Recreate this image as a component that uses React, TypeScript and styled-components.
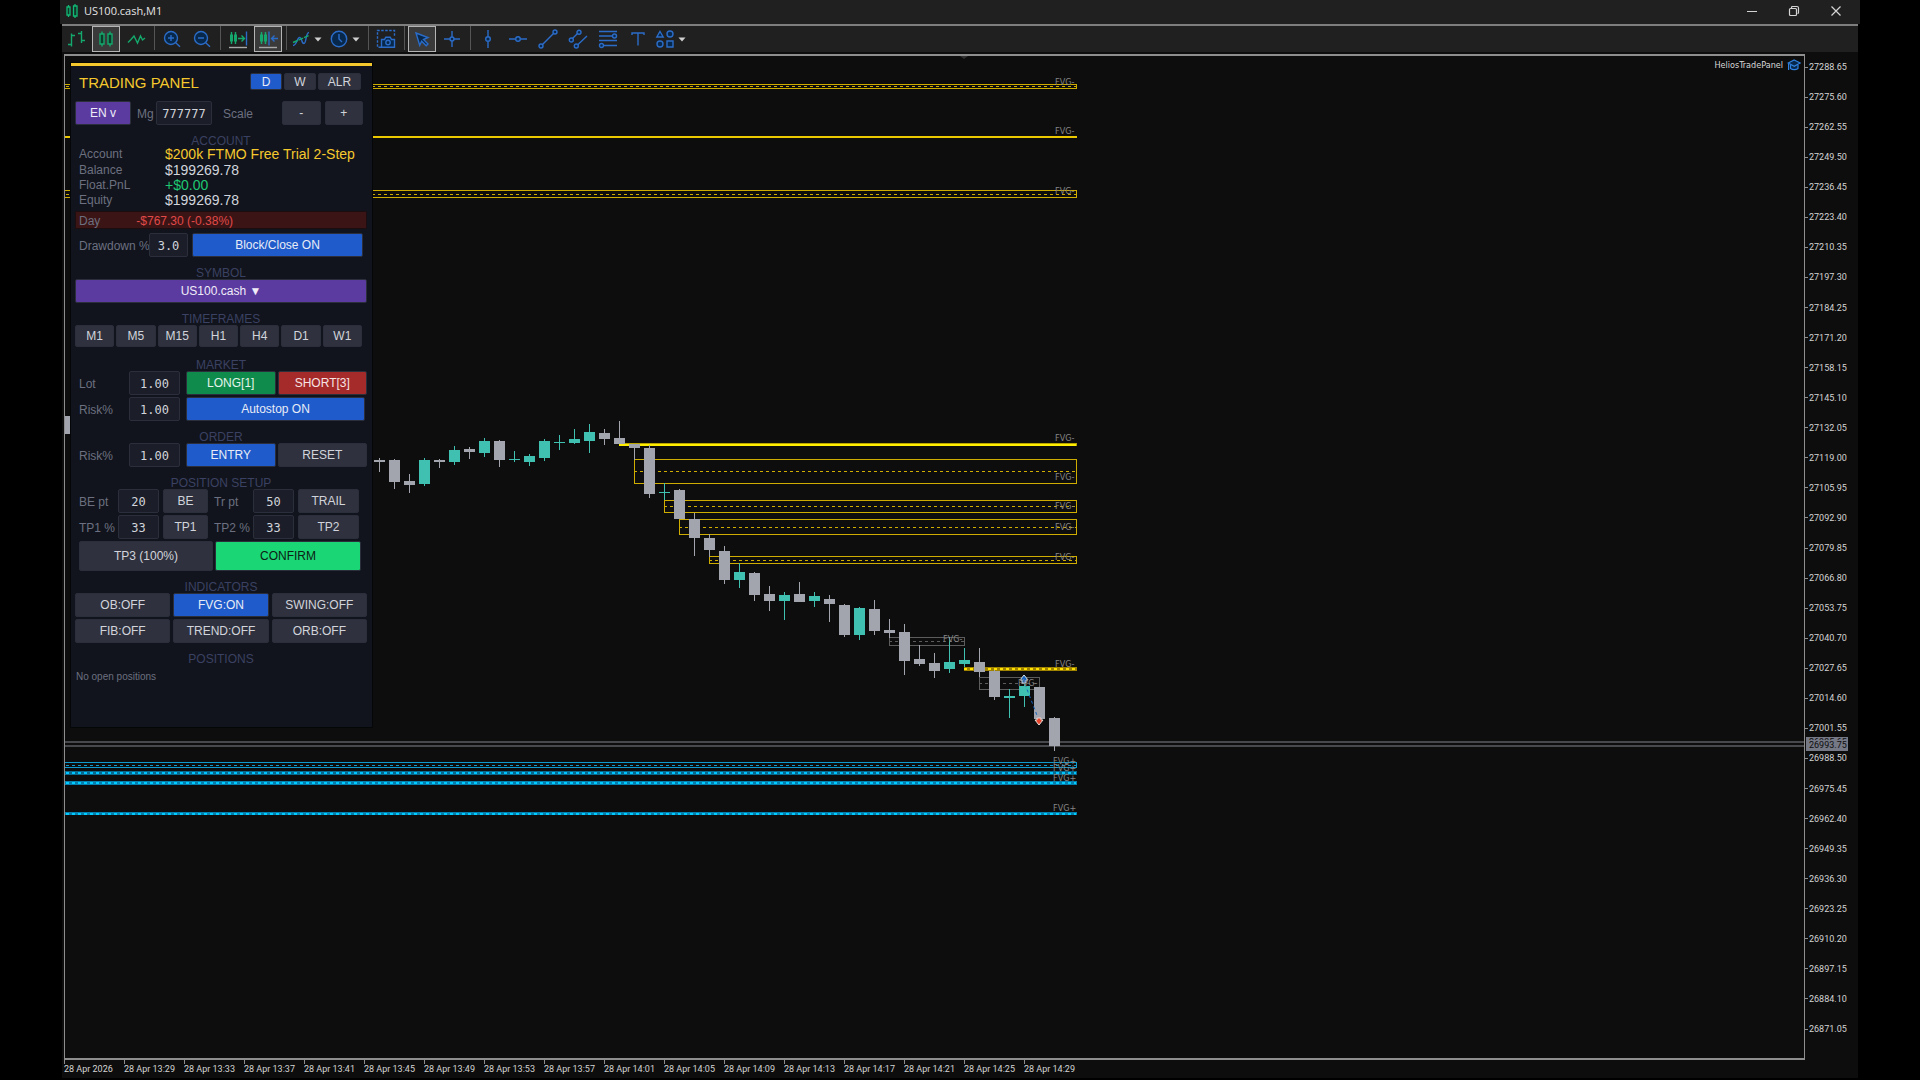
import React from 'react';
import styled, { createGlobalStyle, css } from 'styled-components';

const sans = '"Liberation Sans", Arial, sans-serif';
const tiny = '"DejaVu Sans Condensed", "Open Sans", sans-serif';
const scale = 'Roboto, "Open Sans", sans-serif';
const mono = '"DejaVu Sans Mono", "Liberation Mono", monospace';

const color = {
  desk: '#000000',
  bar: '#202020',
  chart: '#0d0d0d',
  frame: '#8e8e8e',
  panel: '#11141c',
  gold: '#f5c82e',
  blue: '#1f5bca',
  purple: '#5b3ba0',
  green: '#0f8b4c',
  red: '#a52a2a',
  mint: '#1bd675',
  grey: '#2f323e',
  field: '#1b1e28',
  label: '#6c7080',
  heading: '#3b4162',
  text: '#d2d4dc',
  zone: '#cfac00',
  up: '#40c0b0',
  down: '#a2a4ae',
  iconBlue: '#2b6cc8',
  iconGreen: '#14a86c',
  iconFill: '#07284a',
};

const GlobalStyle = createGlobalStyle`
  * { box-sizing: border-box; }
  body { margin: 0; background: ${color.desk}; }
  button, input { font: inherit; margin: 0; padding: 0; }
`;

/* ---------- window frame ---------- */

const Desktop = styled.div`
  min-height: 100vh;
  display: flex;
  flex-direction: column;
  padding: 0 60px 2px;
  font-family: ${sans};
  font-size: 12px;
`;

const TitleBar = styled.header`
  display: flex;
  align-items: center;
  height: 24px;
  padding: 0 3px 2px 4px;
  background: ${color.bar};
`;

const Title = styled.h1`
  flex: 1;
  margin: 0 0 0 5px;
  font: 500 11px/16px "Open Sans", sans-serif;
  color: #e4e4e4;
`;

const WindowButton = styled.button`
  display: grid;
  place-items: center;
  width: 42px;
  height: 20px;
  border: 0;
  background: transparent;
`;

const Body = styled.main`
  flex: 1;
  display: flex;
  flex-direction: column;
  margin: 0 2px;
  background: ${color.chart};
`;

const Toolbar = styled.nav`
  display: flex;
  gap: 2px;
  height: 28px;
  margin-bottom: 2px;
  border-top: 2px solid #7e7e7e;
  background: ${color.bar};
`;

const ToolButton = styled.button<{ $active?: boolean; $menu?: boolean }>`
  display: flex;
  align-items: center;
  justify-content: ${p => (p.$menu ? 'flex-start' : 'center')};
  gap: 3px;
  width: ${p => (p.$menu ? 36 : 28)}px;
  height: 26px;
  border: 1px solid ${p => (p.$active ? '#b4b4b4' : 'transparent')};
  background: ${p => (p.$active ? '#3a3a3a' : 'transparent')};
  svg { flex: none; }
`;

const Divider = styled.span`
  width: 1px;
  height: 24px;
  margin: 0 1px 0 2px;
  background: #555;
`;

/* ---------- chart frame ---------- */

const ChartGrid = styled.section`
  flex: 1;
  display: grid;
  grid-template-columns: 1fr 53px;
  grid-template-rows: minmax(760px, 1fr) 18px;
  padding-left: 2px;
`;

const Plot = styled.div`
  position: relative;
  overflow: hidden;
  border: 1px solid ${color.frame};
  border-width: 2px 1px;
`;

const Canvas = styled.svg`
  position: absolute;
  inset: 0;
  width: 100%;
  height: 100%;
`;

const ExpertTag = styled.div`
  position: absolute;
  top: 3px;
  right: 3px;
  display: flex;
  align-items: center;
  gap: 4px;
  font: 9px/12px ${tiny};
  color: #d8d8d8;
`;

const PriceAxis = styled.ol`
  position: relative;
  display: flex;
  flex-direction: column;
  justify-content: space-between;
  margin: 0;
  padding: 7px 0 25px;
  list-style: none;
  font: 9px/12px ${scale};
  color: #d4d4d4;
`;

const Price = styled.li`
  display: flex;
  align-items: center;
  gap: 1px;
  height: 12px;
  &::before {
    content: '';
    width: 3px;
    height: 1px;
    background: ${color.frame};
  }
`;

const PriceTag = styled.li<{ $top: number }>`
  position: absolute;
  top: ${p => p.$top}px;
  left: 1px;
  width: 42px;
  height: 11px;
  padding-left: 3px;
  line-height: 11px;
  background: #757885;
  color: #0d0d0d;
`;

const TimeAxis = styled.ol`
  grid-column: 1 / -1;
  display: flex;
  margin: 0;
  padding: 0;
  list-style: none;
  overflow: hidden;
  font: 9px/10px ${scale};
  color: #d4d4d4;
`;

const Time = styled.li`
  flex: none;
  width: 60px;
  white-space: nowrap;
  &::before {
    content: '';
    display: block;
    width: 1px;
    height: 4px;
    background: ${color.frame};
  }
`;

/* ---------- trading panel ---------- */

const Panel = styled.form`
  position: absolute;
  top: 7px;
  left: 6px;
  width: 301px;
  padding: 7px 5px 44px 4px;
  border-top: 3px solid ${color.gold};
  background: ${color.panel};
  box-shadow: 0 0 0 1px #050608;
  color: ${color.label};
`;

const PanelHeader = styled.div`
  display: flex;
  align-items: center;
  gap: 2px;
  height: 17px;
  margin-bottom: 11px;
  padding: 0 6px 0 4px;
`;

const PanelTitle = styled.h2`
  flex: 1;
  margin: 0;
  padding-top: 2px;
  font-size: 15px;
  line-height: 17px;
  font-weight: 400;
  color: ${color.gold};
`;

const SectionTitle = styled.h3`
  margin: 10px 0 0;
  font-size: 12px;
  line-height: 12px;
  font-weight: 400;
  text-align: center;
  color: ${color.heading};
`;

const tones = {
  grey: css`background: ${color.grey}; color: ${color.text};`,
  blue: css`background: ${color.blue}; color: #e8ecf6;`,
  purple: css`background: ${color.purple}; color: #f0ecf8;`,
  green: css`background: ${color.green}; color: #e4f4ea;`,
  red: css`background: ${color.red}; color: #f6e4e4;`,
  mint: css`background: ${color.mint}; color: #0c2014;`,
};

const PanelButton = styled.button<{ $tone?: keyof typeof tones; $width?: number }>`
  width: ${p => (p.$width ? `${p.$width}px` : '100%')};
  height: 100%;
  border: 1px solid #2b2f3b;
  border-radius: 2px;
  white-space: nowrap;
  ${p => tones[p.$tone ?? 'grey']}
`;

const Field = styled.input`
  width: 100%;
  height: 100%;
  padding-top: 1px;
  border: 1px solid #2b2f3b;
  border-radius: 2px;
  background: ${color.field};
  color: ${color.text};
  font: 12px ${mono};
  text-align: center;
`;

const Row = styled.div<{ $cols: string; $gap?: number; $height?: number; $pad?: string }>`
  display: grid;
  grid-template-columns: ${p => p.$cols};
  align-items: center;
  column-gap: ${p => p.$gap ?? 0}px;
  height: ${p => p.$height ?? 24}px;
  padding: ${p => p.$pad ?? 0};
  & + & { margin-top: 2px; }
`;

const Group = styled.div`
  display: flex;
  gap: 2px;
  height: 100%;
`;

const ScaleGroup = styled(Group)`
  gap: 4px;
`;

const Label = styled.label<{ $inset?: number }>`
  padding: 2px 0 0 ${p => p.$inset ?? 4}px;
  white-space: nowrap;
`;

const Stats = styled.dl`
  display: grid;
  grid-template-columns: 86px 1fr;
  grid-template-rows: 16px repeat(3, 15px);
  margin: 0;
  padding-left: 4px;
  line-height: 14px;
  white-space: nowrap;
  dd { margin: 0; font-size: 14px; }
`;

const Value = styled.dd<{ $color?: string }>`
  color: ${p => p.$color ?? color.text};
`;

const DayResult = styled.div`
  display: flex;
  align-items: center;
  height: 18px;
  margin: 3px 0 4px;
  padding: 2px 0 0 3px;
  border: 1px solid #1c0d10;
  background: #3b1416;
  output { margin-left: 36px; color: #e04a48; }
`;

const Note = styled.p`
  margin: 6px 0 0 1px;
  font-size: 10px;
  line-height: 12px;
`;

/* ---------- toolbar icons ---------- */

const B = color.iconBlue;
const G = color.iconGreen;
const F = color.iconFill;

function Icon({ children, size = 20 }: { children: React.ReactNode; size?: number }) {
  return (
    <svg width={size} height={size} viewBox="0 0 20 20" fill="none" stroke={B} strokeWidth="1.4" aria-hidden="true">
      {children}
    </svg>
  );
}

const Caret = () => (
  <svg width="8" height="5" viewBox="0 0 8 5" aria-hidden="true">
    <path d="M0.5 0.5h7L4 4.5z" fill="#d0d0d0" />
  </svg>
);

const icons = {
  bars: <Icon><path stroke={G} d="M5.5 4.5v13M2 15.5h3.5M5.5 6.5H9M15.5 2v12M12 4.5h3.500M15.5 11.500H19" /></Icon>,
  candles: (
    <Icon>
      <path stroke={G} d="M6 2.500v2.500M6 15v2.500M14 2.500v2.500M14 15v2.500" />
      <path stroke={G} fill="#0d3a2a" d="M4 5h4v10H4zM12 5h4v10h-4z" />
    </Icon>
  ),
  line: <Icon><path stroke={G} d="M2 13.500l3-3 3-3.500 3.500 7 3-7 2 4 2.500-2" /></Icon>,
  zoomIn: <Icon><circle cx="9" cy="9" r="6.500" fill={F} /><path d="M13.700 13.700l4.300 4M6 9h6M9 6v6" /></Icon>,
  zoomOut: <Icon><circle cx="9" cy="9" r="6.500" fill={F} /><path d="M13.700 13.700l4.300 4M6 9h6" /></Icon>,
  scroll: (
    <Icon>
      <path stroke={G} d="M3.500 3v12M7.500 3v12M10 9.500h6M13.500 6.500l3 3-3 3" />
      <path fill={G} stroke="none" d="M2 5.500h3v7H2zM6 5.500h3v7H6z" />
      <path d="M18.500 2.500v14" />
      <path stroke="#a8a8a8" d="M1 18.500h18" />
    </Icon>
  ),
  shift: (
    <Icon>
      <path stroke={G} d="M3.500 3v12M7.500 3v12" />
      <path fill={G} stroke="none" d="M2 5.500h3v7H2zM6 5.500h3v7H6z" />
      <path d="M11 2.500v14M13.500 9.500H20M16.500 6.500l-3 3 3 3" />
      <path stroke="#a8a8a8" d="M1 18.500h18" />
    </Icon>
  ),
  indicator: (
    <Icon>
      <path d="M2 16.500c4 0 4-8 6.500-8 3 0 1.500 6 4.500 6 2.500 0 1.500-11 5-11" />
      <path stroke={G} strokeDasharray="5 1" d="M2 13.500L18 6.500" />
    </Icon>
  ),
  clock: <Icon><circle cx="10" cy="10" r="7.700" fill={F} /><path d="M10 5v5l3 3" /></Icon>,
  camera: (
    <Icon>
      <path strokeDasharray="2.500 1.500" d="M5 18.300H1.500V1.500h17V7" />
      <path fill={F} d="M5.500 10.500h3l1.300-2.300h4.400l1.300 2.300h3v7.800h-13z" />
      <circle cx="12" cy="13.500" r="2.200" />
    </Icon>
  ),
  cursor: <Icon><path fill={F} d="M4 4l12 4.500-4.500 2 4.500 4.500-1.800 1.800-4.500-4.500-2 4z" /></Icon>,
  cross: <Icon><path d="M10 2v6M10 12v6M2 10h6M12 10h6" /><circle cx="10" cy="10" r="2" fill={F} /></Icon>,
  vline: <Icon><path d="M10 1v6.500M10 12.500V19" /><circle cx="10" cy="10" r="2.300" fill={F} /></Icon>,
  hline: <Icon><path d="M1 10h6.500M12.500 10H19" /><circle cx="10" cy="10" r="2.300" fill={F} /></Icon>,
  trend: <Icon><path d="M4.500 15.500l11-11" /><circle cx="3" cy="17" r="2" fill={F} /><circle cx="17" cy="3" r="2" fill={F} /></Icon>,
  channel: (
    <Icon>
      <path d="M4.500 9.500l5-5M9.500 16L19 7" />
      <circle cx="3.300" cy="11" r="2" fill={F} /><circle cx="11" cy="3.300" r="2" fill={F} /><circle cx="8.300" cy="17" r="2" fill={F} />
    </Icon>
  ),
  fib: (
    <Icon>
      <path d="M1 2.500h18M1 7h13M1 11.500h18M6 16.500h13" />
      <circle cx="16.500" cy="7" r="2" fill={F} /><circle cx="3.500" cy="16.500" r="2" fill={F} />
    </Icon>
  ),
  text: <Icon><path d="M4 6V4h12v2M10 4v12.500" /></Icon>,
  shapes: (
    <Icon>
      <path fill={F} d="M5 2.500l3.200 5.500H1.800zM12 12h6v6h-6z" />
      <circle cx="15" cy="5" r="3" fill={F} /><circle cx="5" cy="15" r="3" fill={F} />
    </Icon>
  ),
};

type Tool = { id: keyof typeof icons; name: string; active?: boolean; menu?: boolean };

const toolGroups: Tool[][] = [
  [{ id: 'bars', name: 'Bar chart' }, { id: 'candles', name: 'Candlesticks', active: true }, { id: 'line', name: 'Line chart' }],
  [{ id: 'zoomIn', name: 'Zoom in' }, { id: 'zoomOut', name: 'Zoom out' }],
  [{ id: 'scroll', name: 'Auto scroll' }, { id: 'shift', name: 'Chart shift', active: true }],
  [{ id: 'indicator', name: 'Indicators', menu: true }, { id: 'clock', name: 'Timeframes', menu: true }],
  [{ id: 'camera', name: 'Screenshot' }],
  [{ id: 'cursor', name: 'Cursor', active: true }, { id: 'cross', name: 'Crosshair' }],
  [
    { id: 'vline', name: 'Vertical line' }, { id: 'hline', name: 'Horizontal line' }, { id: 'trend', name: 'Trendline' },
    { id: 'channel', name: 'Channel' }, { id: 'fib', name: 'Fibonacci' }, { id: 'text', name: 'Text' },
    { id: 'shapes', name: 'Shapes', menu: true },
  ],
];

/* ---------- chart data ---------- */

// high, body top, body bottom, low, rising
type Candle = [number, number, number, number, boolean?];

const FIRST_X = 379;
const STEP = 15;

const candles: Candle[] = [
  [458, 460, 462, 472], [459, 460, 482, 489], [474, 481, 485, 493], [458, 460, 484, 486, true],
  [459, 460, 462, 468], [446, 450, 462, 465, true], [447, 449, 452, 459], [438, 441, 453, 457, true],
  [440, 441, 460, 467], [451, 459, 460, 462, true], [454, 456, 462, 466, true], [439, 441, 458, 461, true],
  [435, 442, 443, 450, true], [429, 439, 443, 444, true], [424, 432, 441, 453, true], [429, 433, 439, 445],
  [421, 438, 444, 444], [444, 444, 448, 460], [445, 448, 494, 498], [483, 492, 493, 500, true],
  [489, 490, 519, 519], [513, 519, 538, 556], [534, 538, 550, 557], [546, 551, 580, 584],
  [563, 572, 580, 588, true], [572, 573, 595, 601], [586, 594, 601, 611], [592, 595, 601, 620, true],
  [582, 594, 602, 602], [592, 596, 601, 607, true], [595, 599, 604, 622], [604, 605, 635, 637],
  [607, 608, 635, 640, true], [600, 609, 631, 635], [619, 630, 633, 638], [624, 632, 661, 675],
  [645, 659, 664, 666], [653, 663, 671, 678], [637, 662, 669, 673, true], [648, 660, 664, 667, true],
  [648, 662, 672, 677], [670, 671, 697, 700], [689, 696, 698, 718, true], [682, 686, 696, 707, true],
  [687, 687, 719, 720], [717, 718, 746, 751],
];

type Zone = { x: number; end: number; top: number; bottom: number; stroke: string };
const END = 1076;

const zones: Zone[] = [
  { x: 60, end: END, top: 84, bottom: 88, stroke: color.zone },
  { x: 60, end: END, top: 190, bottom: 197, stroke: color.zone },
  { x: 634, end: END, top: 459, bottom: 483, stroke: color.zone },
  { x: 664, end: END, top: 500, bottom: 512, stroke: color.zone },
  { x: 679, end: END, top: 519, bottom: 534, stroke: color.zone },
  { x: 709, end: END, top: 556, bottom: 563, stroke: color.zone },
  { x: 889, end: 964, top: 637, bottom: 645, stroke: '#5c5c5c' },
  { x: 979, end: 1039, top: 677, bottom: 689, stroke: '#5c5c5c' },
  { x: 60, end: END, top: 762, bottom: 767, stroke: '#1099cc' },
];

const bands = [
  { x: 60, y: 136, h: 2, fill: '#ecc800', dash: '' },
  { x: 619, y: 443, h: 3, fill: '#b8a400', dash: '#ffee00' },
  { x: 964, y: 667, h: 4, fill: '#a08400', dash: '#ffe000' },
  { x: 60, y: 771, h: 4, fill: '#07698e', dash: '#00c4ff' },
  { x: 60, y: 781, h: 4, fill: '#0580ae', dash: '#00ccff' },
  { x: 60, y: 812, h: 3, fill: '#0580ae', dash: '#00ccff' },
];

const marks: [number, number, string][] = [
  [1055, 85, 'FVG-'], [1055, 134, 'FVG-'], [1055, 194, 'FVG-'], [1055, 441, 'FVG-'], [1055, 480, 'FVG-'],
  [1055, 509, 'FVG-'], [1055, 530, 'FVG-'], [1055, 560, 'FVG-'], [943, 642, 'FVG-'], [1055, 667, 'FVG-'],
  [1018, 686, 'FVG-'], [1053, 764, 'FVG+'], [1053, 771, 'FVG+'], [1053, 781, 'FVG+'], [1053, 811, 'FVG+'],
];

const prices = Array.from({ length: 33 }, (_, i) => (27288.65 - i * 13.05).toFixed(2));
const times = [
  '2026', '13:29', '13:33', '13:37', '13:41', '13:45', '13:49', '13:53', '13:57',
  '14:01', '14:05', '14:09', '14:13', '14:17', '14:21', '14:25', '14:29',
];

function CandleShape({ x, data }: { x: number; data: Candle }) {
  const [high, top, bottom, low, rising] = data;
  const fill = rising ? color.up : color.down;
  return (
    <g fill={fill}>
      <rect x={x} y={high} width="1" height={Math.max(low - high, 1)} />
      <rect x={x - 5} y={top} width="11" height={bottom - top} />
    </g>
  );
}

function Chart() {
  return (
    <Canvas role="img" aria-label="US100.cash one minute candles">
      <g transform="translate(-65 -56)" shapeRendering="crispEdges">
        {zones.map(z => (
          <g key={`${z.x}-${z.top}`} fill="none" stroke={z.stroke}>
            <rect x={z.x} y={z.top} width={z.end - z.x} height={z.bottom - z.top} />
            <path strokeDasharray="3 3" d={`M${z.x} ${Math.round((z.top + z.bottom) / 2)}H${z.end}`} />
          </g>
        ))}
        {bands.map(b => (
          <g key={b.y}>
            <rect x={b.x} y={b.y} width={END + 1 - b.x} height={b.h} fill={b.fill} />
            {b.dash && <path stroke={b.dash} strokeWidth="2" strokeDasharray={b.h === 3 && b.x === 619 ? undefined : '3 3'} d={`M${b.x} ${b.y + 2}H${END}`} />}
          </g>
        ))}
        <rect x="60" y="741" width="110%" height="2" fill="#46484c" />
        <rect x="60" y="745" width="110%" height="2" fill="#46484c" />
        <CandleShape x={FIRST_X - 21 * STEP} data={[416, 416, 434, 434]} />
        {candles.map((c, i) => <CandleShape key={i} x={FIRST_X + i * STEP} data={c} />)}
      </g>
      <g transform="translate(-65 -56)">
        <path d="M960 56h8l-4 3z" fill="#303030" />
        <path d="M1025 684L1038 718" stroke="#1464c0" strokeDasharray="3 3" fill="none" />
        <path d="M1024 675l4 5h-2v3h-4v-3h-2z" fill="#1464c0" stroke="#d8e0ea" strokeWidth="1" />
        <path d="M1039 725l-4-5h2v-2h4v2h2z" fill="#e8452c" stroke="#e8dcd8" strokeWidth="1" />
        <g fill="#868686" fontFamily='"DejaVu Sans Condensed", sans-serif' fontSize="9">
          {marks.map(([x, y, t]) => <text key={`${x}-${y}`} x={x} y={y}>{t}</text>)}
        </g>
      </g>
    </Canvas>
  );
}

function NumberField({ id, label, value, inset }: { id: string; label: string; value: string; inset?: number }) {
  return (
    <>
      <Label htmlFor={id} $inset={inset}>{label}</Label>
      <Field id={id} defaultValue={value} />
    </>
  );
}

function TradingPanel() {
  return (
    <Panel onSubmit={e => e.preventDefault()}>
      <PanelHeader>
        <PanelTitle>TRADING PANEL</PanelTitle>
        <PanelButton type="button" $tone="blue" $width={32}>D</PanelButton>
        <PanelButton type="button" $width={32}>W</PanelButton>
        <PanelButton type="button" $width={43}>ALR</PanelButton>
      </PanelHeader>

      <Row $cols="56px 25px 56px 1fr 81px" $pad="0 4px 0 0">
        <PanelButton type="button" $tone="purple">EN v</PanelButton>
        <NumberField id="magic" label="Mg" value="777777" inset={6} />
        <Label as="span" $inset={11}>Scale</Label>
        <ScaleGroup>
          <PanelButton type="button">-</PanelButton>
          <PanelButton type="button">+</PanelButton>
        </ScaleGroup>
      </Row>

      <SectionTitle>ACCOUNT</SectionTitle>
      <Stats>
        <dt>Account</dt><Value $color={color.gold}>$200k FTMO Free Trial 2-Step</Value>
        <dt>Balance</dt><Value>$199269.78</Value>
        <dt>Float.PnL</dt><Value $color="#1fc873">+$0.00</Value>
        <dt>Equity</dt><Value>$199269.78</Value>
      </Stats>
      <DayResult>Day<output>-$767.30 (-0.38%)</output></DayResult>
      <Row $cols="70px 39px 1fr" $gap={4} $pad="0 4px 0 0">
        <NumberField id="drawdown" label="Drawdown %" value="3.0" />
        <PanelButton type="button" $tone="blue">Block/Close ON</PanelButton>
      </Row>

      <SectionTitle>SYMBOL</SectionTitle>
      <Row $cols="1fr">
        <PanelButton type="button" $tone="purple">US100.cash ▼</PanelButton>
      </Row>

      <SectionTitle>TIMEFRAMES</SectionTitle>
      <Row $cols="repeat(7, 1fr)" $gap={2} $height={24} $pad="0 5px 2px 0">
        {['M1', 'M5', 'M15', 'H1', 'H4', 'D1', 'W1'].map(t => <PanelButton key={t} type="button">{t}</PanelButton>)}
      </Row>

      <SectionTitle>MARKET</SectionTitle>
      <Row $cols="48px 51px 1fr" $gap={6}>
        <NumberField id="lot" label="Lot" value="1.00" />
        <Group>
          <PanelButton type="button" $tone="green">LONG[1]</PanelButton>
          <PanelButton type="button" $tone="red">SHORT[3]</PanelButton>
        </Group>
      </Row>
      <Row $cols="48px 51px 1fr" $gap={6} $pad="0 2px 0 0">
        <NumberField id="market-risk" label="Risk%" value="1.00" />
        <PanelButton type="button" $tone="blue">Autostop ON</PanelButton>
      </Row>

      <SectionTitle>ORDER</SectionTitle>
      <Row $cols="48px 51px 1fr" $gap={6}>
        <NumberField id="order-risk" label="Risk%" value="1.00" />
        <Group>
          <PanelButton type="button" $tone="blue">ENTRY</PanelButton>
          <PanelButton type="button">RESET</PanelButton>
        </Group>
      </Row>

      <SectionTitle>POSITION SETUP</SectionTitle>
      <Row $cols="39px 41px 45px 37px 41px 61px" $gap={4}>
        <NumberField id="be" label="BE pt" value="20" />
        <PanelButton type="button">BE</PanelButton>
        <NumberField id="trail" label="Tr pt" value="50" inset={2} />
        <PanelButton type="button">TRAIL</PanelButton>
      </Row>
      <Row $cols="39px 41px 45px 37px 41px 61px" $gap={4}>
        <NumberField id="tp1" label="TP1 %" value="33" />
        <PanelButton type="button">TP1</PanelButton>
        <NumberField id="tp2" label="TP2 %" value="33" inset={2} />
        <PanelButton type="button">TP2</PanelButton>
      </Row>
      <Row $cols="134px 1fr" $gap={2} $height={30} $pad="0 6px 0 4px">
        <PanelButton type="button">TP3 (100%)</PanelButton>
        <PanelButton type="submit" $tone="mint">CONFIRM</PanelButton>
      </Row>

      <SectionTitle>INDICATORS</SectionTitle>
      <Row $cols="repeat(3, 1fr)" $gap={3}>
        <PanelButton type="button">OB:OFF</PanelButton>
        <PanelButton type="button" $tone="blue">FVG:ON</PanelButton>
        <PanelButton type="button">SWING:OFF</PanelButton>
      </Row>
      <Row $cols="repeat(3, 1fr)" $gap={3}>
        <PanelButton type="button">FIB:OFF</PanelButton>
        <PanelButton type="button">TREND:OFF</PanelButton>
        <PanelButton type="button">ORB:OFF</PanelButton>
      </Row>

      <SectionTitle>POSITIONS</SectionTitle>
      <Note>No open positions</Note>
    </Panel>
  );
}

export default function App() {
  return (
    <>
      <GlobalStyle />
      <Desktop>
        <TitleBar>
          <svg width="15" height="16" viewBox="0 0 15 16" fill="#0d3a2a" stroke="#12b874" strokeWidth="1.3" aria-hidden="true">
            <path d="M4.500 2v2M4.500 12v2M11 1v2M11 13v2" />
            <path d="M3 4h3v8H3zM9.500 3h3.500v10H9.500z" />
          </svg>
          <Title>US100.cash,M1</Title>
          <WindowButton aria-label="Minimize">
            <svg width="12" height="12" stroke="#d4d4d4"><path d="M1 6.500h10" /></svg>
          </WindowButton>
          <WindowButton aria-label="Restore">
            <svg width="12" height="12" fill="none" stroke="#d4d4d4" strokeWidth="1.2">
              <rect x="1.500" y="3.500" width="7" height="7" rx="1" />
              <path d="M3.500 3V2.500a1 1 0 0 1 1-1h4.500a1.500 1.500 0 0 1 1.500 1.500v4.500a1 1 0 0 1-1 1" />
            </svg>
          </WindowButton>
          <WindowButton aria-label="Close">
            <svg width="12" height="12" stroke="#d4d4d4" strokeWidth="1.200"><path d="M1.500 1.500l9 9M10.500 1.500l-9 9" /></svg>
          </WindowButton>
        </TitleBar>

        <Body>
          <Toolbar aria-label="Chart tools">
            {toolGroups.map((group, i) => (
              <React.Fragment key={i}>
                {i > 0 && <Divider />}
                {group.map(t => (
                  <ToolButton key={t.id} type="button" aria-label={t.name} $active={t.active} $menu={t.menu}>
                    {icons[t.id]}
                    {t.menu && <Caret />}
                  </ToolButton>
                ))}
              </React.Fragment>
            ))}
          </Toolbar>

          <ChartGrid>
            <Plot>
              <Chart />
              <ExpertTag>
                HeliosTradePanel
                <svg width="14" height="12" viewBox="0 0 14 12" fill={F} stroke="#2f80e0" strokeWidth="1.200" aria-hidden="true">
                  <path d="M3.500 6v3.500c2 1.500 5.500 1.500 7.500 0V6" />
                  <path d="M7.200 1L13.200 4 7.200 7.200 1.200 4z" />
                  <path d="M1.600 4.500V11" />
                </svg>
              </ExpertTag>
              <TradingPanel />
            </Plot>
            <PriceAxis>
              {prices.map(p => <Price key={p}>{p}</Price>)}
              <PriceTag $top={683}>26995.65</PriceTag>
              <PriceTag $top={686}>26993.75</PriceTag>
            </PriceAxis>
            <TimeAxis>
              {times.map(t => <Time key={t}>28 Apr {t}</Time>)}
            </TimeAxis>
          </ChartGrid>
        </Body>
      </Desktop>
    </>
  );
}
